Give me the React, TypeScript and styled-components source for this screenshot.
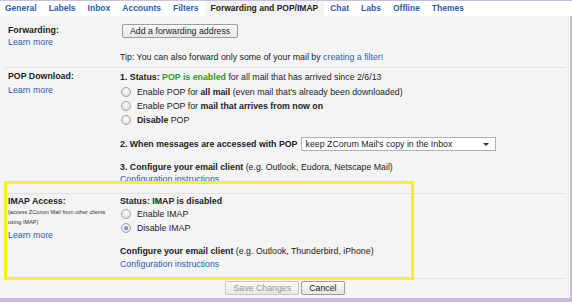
import React from 'react'
import styled, { createGlobalStyle } from 'styled-components'

const GlobalStyle = createGlobalStyle`
  html, body { margin: 0; padding: 0; background: #ffffff; }
  body { font-family: "Liberation Sans", Arial, sans-serif; font-size: 8.8px; color: #222; }
`

const Frame = styled.div`
  position: relative;
  width: 572px;
  height: 302px;
  box-sizing: border-box;
  border-top: 1px solid #c9c1da;
  border-bottom: 4px solid #c9b9e2;
  display: flex;
  flex-direction: column;
  overflow: hidden;
`

const TabBar = styled.div`
  display: flex;
  height: 15px;
  background: #ffffff;
  margin-left: -1px;
`

const Tab = styled.div<{ $active?: boolean }>`
  padding: 0 6px;
  line-height: 15px;
  font-weight: bold;
  font-size: 8.5px;
  color: ${p => (p.$active ? '#222' : '#2a5db0')};
  background: ${p => (p.$active ? '#f3f3f3' : 'transparent')};
`

const Body = styled.div`
  flex: 1;
  background: #f4f4f4;
  border-right: 2px solid #c6bddb;
  display: flex;
  flex-direction: column;
`

const Section = styled.div<{ $pt: number; $pb: number }>`
  display: grid;
  grid-template-columns: 112px 1fr;
  margin: 0 4px;
  padding: ${p => p.$pt}px 0 ${p => p.$pb}px 4px;
  border-bottom: 1px solid #e2e2e2;
`

const Col = styled.div`
  display: flex;
  flex-direction: column;
  align-items: flex-start;
`

const Label = styled.div`
  font-weight: bold;
  line-height: 12px;
`

const Small = styled.div`
  font-size: 5.6px;
  line-height: 10px;
  color: #333;
`

const Link = styled.a`
  color: #2a5db0;
  text-decoration: none;
  cursor: pointer;
`

const Line = styled.div<{ $lh?: number; $mt?: number }>`
  line-height: ${p => p.$lh ?? 12}px;
  margin-top: ${p => p.$mt ?? 0}px;
  white-space: nowrap;
  display: flex;
  align-items: center;
`

const Green = styled.b`
  color: #2f9a2f;
`

const Button = styled.button<{ $disabled?: boolean }>`
  height: 14px;
  padding: 0 7px;
  font-family: inherit;
  font-size: 8.8px;
  line-height: 12px;
  color: ${p => (p.$disabled ? '#9a9a9a' : '#222')};
  background: linear-gradient(#fbfbfb, #e6e6e6);
  border: 1px solid ${p => (p.$disabled ? '#c8c8c8' : '#9d9d9d')};
  border-radius: 2px;
  cursor: pointer;
`

const Radio = styled.span<{ $checked?: boolean }>`
  position: relative;
  width: 8px;
  height: 8px;
  margin: 0 6px 0 1px;
  border-radius: 50%;
  border: 1px solid #a3a3a3;
  background: radial-gradient(circle at 50% 35%, #ffffff, #d4d4d4);
  flex: none;
  &::after {
    content: '';
    display: ${p => (p.$checked ? 'block' : 'none')};
    position: absolute;
    left: 2px;
    top: 2px;
    width: 4px;
    height: 4px;
    border-radius: 50%;
    background: radial-gradient(circle at 40% 35%, #8fb4e0, #2f5f9c);
  }
`

const Select = styled.div`
  position: relative;
  box-sizing: border-box;
  width: 195px;
  height: 14px;
  margin-left: 3px;
  padding-left: 4px;
  line-height: 12px;
  background: #ffffff;
  border: 1px solid #b0b0b0;
  &::after {
    content: '';
    position: absolute;
    right: 6px;
    top: 5px;
    border-left: 3px solid transparent;
    border-right: 3px solid transparent;
    border-top: 3px solid #333;
  }
`

const Footer = styled.div`
  display: flex;
  justify-content: center;
  gap: 2px;
  padding-top: 2px;
`

const Highlight = styled.div`
  position: absolute;
  left: 4px;
  top: 180px;
  width: 410px;
  height: 99px;
  box-sizing: border-box;
  border: 3px solid #f8f020;
  pointer-events: none;
`

const tabs = ['General', 'Labels', 'Inbox', 'Accounts', 'Filters', 'Forwarding and POP/IMAP', 'Chat', 'Labs', 'Offline', 'Themes']

export default function App() {
  return (
    <>
      <GlobalStyle />
      <Frame>
        <TabBar>
          {tabs.map(t => (
            <Tab key={t} $active={t === 'Forwarding and POP/IMAP'}>{t}</Tab>
          ))}
        </TabBar>
        <Body>
          <Section $pt={8} $pb={4}>
            <Col>
              <Label>Forwarding:</Label>
              <Line><Link>Learn more</Link></Line>
            </Col>
            <Col>
              <Line><Button style={{ marginLeft: 2 }}>Add a forwarding address</Button></Line>
              <Line $mt={13}>Tip: You can also forward only some of your mail by&nbsp;<Link>creating a filter!</Link></Line>
            </Col>
          </Section>

          <Section $pt={2} $pb={8}>
            <Col>
              <Label>POP Download:</Label>
              <Line $mt={2}><Link>Learn more</Link></Line>
            </Col>
            <Col>
              <Line $lh={14} style={{ marginBottom: 1 }}><b>1. Status:&nbsp;</b><Green>POP is enabled</Green>&nbsp;for all mail that has arrived since 2/6/13</Line>
              <Line $lh={14}><Radio />Enable POP for&nbsp;<b>all mail</b>&nbsp;(even mail that's already been downloaded)</Line>
              <Line $lh={14}><Radio />Enable POP for&nbsp;<b>mail that arrives from now on</b></Line>
              <Line $lh={14}><Radio /><b>Disable</b>&nbsp;POP</Line>
              <Line $lh={14} $mt={10}>
                <b>2. When messages are accessed with POP</b>
                <Select>keep ZCorum Mail's copy in the Inbox</Select>
              </Line>
              <Line $mt={10}><b>3. Configure your email client</b>&nbsp;(e.g. Outlook, Eudora, Netscape Mail)</Line>
              <Line><Link>Configuration instructions</Link></Line>
            </Col>
          </Section>

          <Section $pt={1} $pb={7}>
            <Col>
              <Label>IMAP Access:</Label>
              <Small>(access ZCorum Mail from other clients</Small>
              <Small>using IMAP)</Small>
              <Line $mt={2}><Link>Learn more</Link></Line>
            </Col>
            <Col>
              <Line><b>Status: IMAP is disabled</b></Line>
              <Line $lh={14}><Radio />Enable IMAP</Line>
              <Line $lh={14}><Radio $checked />Disable IMAP</Line>
              <Line $lh={13} $mt={10}><b>Configure your email client</b>&nbsp;(e.g. Outlook, Thunderbird, iPhone)</Line>
              <Line $lh={13}><Link>Configuration instructions</Link></Line>
            </Col>
          </Section>

          <Footer>
            <Button $disabled>Save Changes</Button>
            <Button>Cancel</Button>
          </Footer>
        </Body>
        <Highlight />
      </Frame>
    </>
  )
}
